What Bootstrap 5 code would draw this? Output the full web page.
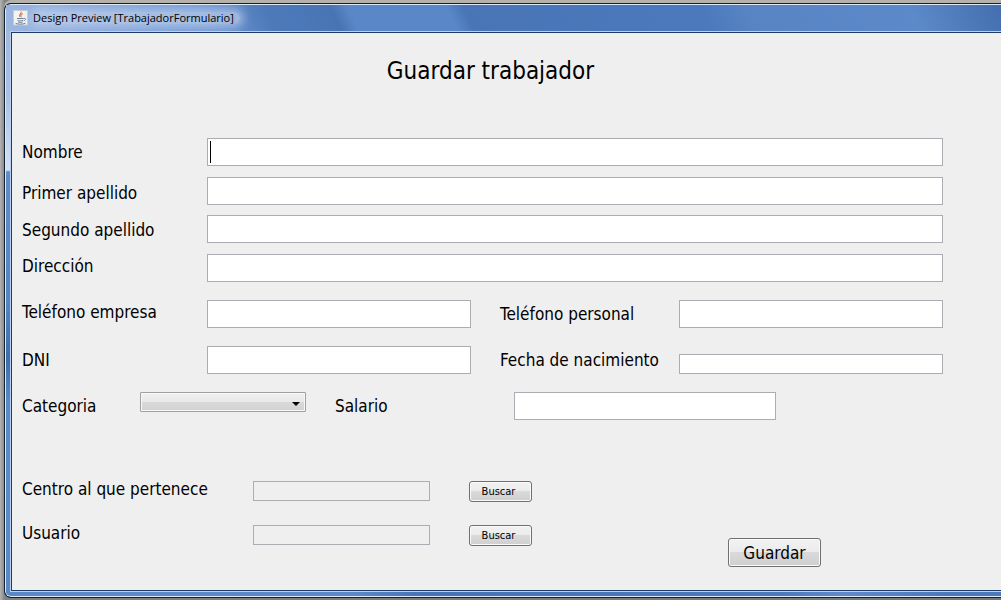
<!DOCTYPE html>
<html lang="es">
<head>
<meta charset="utf-8">
<meta name="viewport" content="width=device-width, initial-scale=1">
<title>Design Preview [TrabajadorFormulario]</title>
<link href="https://cdn.jsdelivr.net/npm/bootstrap@5.3.0/dist/css/bootstrap.min.css" rel="stylesheet">
<style>
  body {
    font-family: "DejaVu Sans Condensed", "Open Sans", sans-serif;
    font-size: 17px;
    line-height: 24px;
    color: #000;
    background: linear-gradient(90deg, #b4b4b4 0, #808080 5px, #77777a 100%);
    padding: 3px 0 2px 4px;
  }
  /* Window frame */
  .window {
    border: 1px solid #10202f;
    border-right: 0;
    border-radius: 7px 0 0 7px;
    box-shadow: inset 1px 1px 0 #dcebfa, inset 0 -1px 0 #dcebfa, 0 -3px 0 #b5b1ab;
    padding: 1px 0 6px 6px;
    background:
      linear-gradient(#9db5dd 0, #a9bfe6 90px, #d3e1f5 166px, #628cc8 168px, #5584c4 300px, #3f6cab 355px, #5b8acb 400px, #5a88c7 100%) 0 0 / 8px 100% no-repeat,
      linear-gradient(90deg, #5b88c6 0, #5b88c6 35%, #4573b4 42%, #4b79bb 78%, #6189ca 84%, #4a78bb 95%, #4b79bb 100%);
  }
  .titlebar {
    height: 27px;
    padding: 0 0 1px 6px;
    margin-left: -5px;
    font-family: "Open Sans", "Noto Sans", sans-serif;
    font-size: 11px;
    overflow: hidden;
    background: linear-gradient(65deg, #9db7e0 0, #86a6da 90px, #6f97d2 190px, #4d79b8 245px, #4b78b8 270px, #4974b2 305px, #5a87c7 320px, #5a87c7 410px, #4975b6 425px, #4b79bc 640px, #5884c4 680px, #5c89c9 830px, #456fae 910px);
  }
  .caption {
    line-height: 12px;
    padding-right: 6px;
    border-radius: 6px;
    background: rgba(196, 212, 236, .6);
    box-shadow: 0 0 8px 4px rgba(196, 212, 236, .6);
  }
  .panel {
    background: #efefef;
    border: 1px solid #1d3d68;
    border-right: 0;
    box-shadow: 0 0 0 1px #b8d2ee;
    padding: 25px 58px 23px 10px;
  }
  .form-title {
    font-size: 24px;
    font-weight: 400;
    line-height: 26px;
    padding-left: 16px;
    margin-bottom: 54px;
  }
  .line { display: flex; min-height: 28px; }
  .fields { display: flex; flex-direction: column; gap: 11px; }
  .names { gap: 10px; }
  .names .line + .line { min-height: 29px; }
  .spaced { gap: 18px; margin-top: 17px; }
  .lookups { gap: 23px; padding-bottom: 21px; }
  .lookup-area { margin-top: 61px; }
  .w-main { width: 185px; flex: none; }
  .w-side { width: 179px; flex: none; margin-left: 29px; }
  .w-cat { width: 118px; flex: none; }
  .w-look { width: 231px; flex: none; line-height: 16px; }
  .box {
    border: 1px solid #abadb3;
    border-radius: 0;
    background: #fff;
    height: 28px;
    min-width: 0;
    padding: 0 3px;
    font-size: 17px;
  }
  .half { flex: 1 1 0; width: 0; }
  .box-low { height: 20px; }
  .box-low:read-only { background: #efefef; }
  .salary { width: 262px; }
  .lookup-box { width: 177px; }
  .caret {
    position: absolute;
    left: 3px;
    top: 3px;
    width: 1px;
    height: 22px;
    background: #000;
  }
  .combo {
    width: 166px;
    height: 20px;
    min-height: 0;
    padding: 0 20px 0 4px;
    border: 1px solid #a0a0a0;
    border-radius: 1px;
    font-size: 11px;
    box-shadow: inset 0 0 0 1px #f8f8f8;
    background:
      url("data:image/svg+xml,%3Csvg xmlns='http://www.w3.org/2000/svg' viewBox='0 0 8 4'%3E%3Cpath d='M0 0h8L4 4z'/%3E%3C/svg%3E") right 5px top 9px / 8px 4px no-repeat,
      linear-gradient(#f0f0f0 0, #e9e9e9 49%, #d9d9d9 50%, #d2d2d2 100%);
  }
  .key {
    color: #000;
    border: 1px solid #707070;
    border-radius: 3px;
    padding: 0;
    box-shadow: inset 0 0 0 1px #fafafa;
    background: linear-gradient(#f2f2f2 0, #ebebeb 49%, #dadada 50%, #cfcfcf 100%);
  }
  .key-small {
    width: 63px;
    height: 21px;
    margin-left: 39px;
    padding-right: 4px;
    font-size: 11px;
    line-height: 17px;
  }
  .key-main { width: 93px; height: 29px; margin-left: 196px; font-size: 17px; line-height: 24px; }
</style>
</head>
<body class="min-vh-100 d-flex flex-column">
<main class="window flex-grow-1 d-flex flex-column">
  <header class="titlebar d-flex align-items-center">
    <svg class="me-1" width="17" height="16" viewBox="0 0 17 16" aria-hidden="true">
      <rect x="1.500" y=".5" width="14" height="14.500" fill="#f3f3f1" stroke="#c9cbd0"/>
      <path d="M9 1.500c1.200 2-3 3-1.200 5.300M10.800 3.600c-2.200 1.100-2.600 2-1.300 3.600" fill="none" stroke="#dd7a45" stroke-width="1.100"/>
      <path d="M5 8.500h6.500M5.500 10.300c1 .8 4.500.8 5.700 0M6 12c1.500.6 3.500.6 4.700 0M11.500 8.500c2.700-.8 2.600 1.700.3 2.300M3.500 13.300c2.500 1.200 7.500 1.100 10-.1" fill="none" stroke="#657f9c" stroke-width="1"/>
    </svg>
    <span class="caption">Design Preview [TrabajadorFormulario]</span>
  </header>
  <form class="panel flex-grow-1">
    <h1 class="form-title text-center">Guardar trabajador</h1>
    <div class="fields names">
      <div class="line align-items-center">
        <label class="w-main" for="nombre">Nombre</label>
        <div class="position-relative d-flex flex-fill">
          <input class="box flex-fill" id="nombre" type="text"><span class="caret"></span>
        </div>
      </div>
      <div class="line align-items-end">
        <label class="w-main" for="apellido1">Primer apellido</label>
        <input class="box flex-fill" id="apellido1" type="text">
      </div>
      <div class="line align-items-start">
        <label class="w-main align-self-center" for="apellido2">Segundo apellido</label>
        <input class="box flex-fill" id="apellido2" type="text">
      </div>
      <div class="line align-items-start">
        <label class="w-main" for="direccion">Dirección</label>
        <input class="box flex-fill" id="direccion" type="text">
      </div>
    </div>
    <div class="fields spaced">
      <div class="line align-items-start">
        <label class="w-main" for="telEmpresa">Teléfono empresa</label>
        <input class="box half" id="telEmpresa" type="tel">
        <label class="w-side align-self-center" for="telPersonal">Teléfono personal</label>
        <input class="box half" id="telPersonal" type="tel">
      </div>
      <div class="line align-items-center">
        <label class="w-main" for="dni">DNI</label>
        <input class="box half" id="dni" type="text">
        <label class="w-side" for="nacimiento">Fecha de nacimiento</label>
        <input class="box box-low half align-self-end" id="nacimiento" type="text">
      </div>
      <div class="line align-items-start">
        <label class="w-cat align-self-center" for="categoria">Categoria</label>
        <select class="form-select combo" id="categoria"><option></option></select>
        <label class="w-side align-self-center" for="salario">Salario</label>
        <input class="box salary" id="salario" type="text">
      </div>
    </div>
    <div class="lookup-area d-flex align-items-end">
      <div class="fields lookups">
        <div class="d-flex align-items-start">
          <label class="w-look" for="centro">Centro al que pertenece</label>
          <input class="box box-low lookup-box" id="centro" type="text" readonly>
          <button class="btn key key-small" type="button">Buscar</button>
        </div>
        <div class="d-flex align-items-start">
          <label class="w-look" for="usuario">Usuario</label>
          <input class="box box-low lookup-box" id="usuario" type="text" readonly>
          <button class="btn key key-small" type="button">Buscar</button>
        </div>
      </div>
      <button class="btn key key-main" type="submit">Guardar</button>
    </div>
  </form>
</main>
<script src="https://cdn.jsdelivr.net/npm/bootstrap@5.3.0/dist/js/bootstrap.bundle.min.js"></script>
</body>
</html>
